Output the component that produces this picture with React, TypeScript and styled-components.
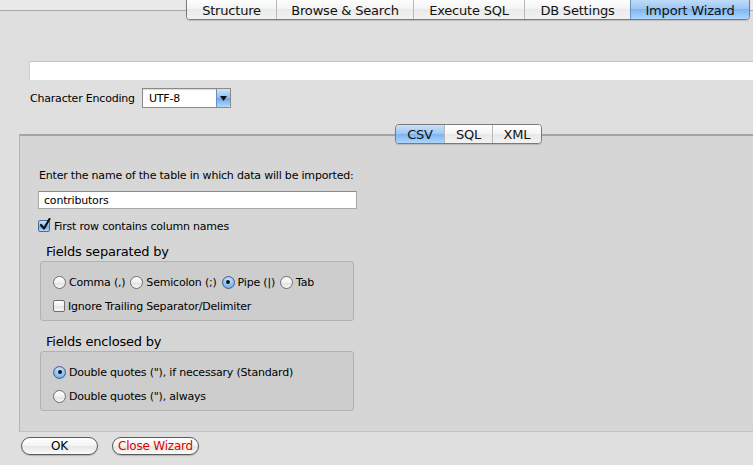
import React from "react";
import styled, { createGlobalStyle, css } from "styled-components";

const Global = createGlobalStyle`
  html, body { margin: 0; padding: 0; background: #dfdfdf; }
  body { font-family: "Lucida Grande", "DejaVu Sans", sans-serif; font-size: 11px; color: #000; letter-spacing: -0.2px; }
  * { box-sizing: border-box; }
`;

const Page = styled.div`
  width: 753px;
  height: 465px;
  overflow: hidden;
  background: #dfdfdf;
  display: flex;
  flex-direction: column;
`;

const Header = styled.div`
  height: 21px;
  background: linear-gradient(to bottom, #e9e9e9 0, #e9e9e9 10px, #a6a6a6 10px, #a6a6a6 11px, #dfdfdf 11px);
  display: flex;
  justify-content: flex-end;
  padding-right: 3px;
`;

const Segmented = styled.div<{ $h: number; $top?: number }>`
  display: flex;
  height: ${(p) => p.$h}px;
  margin-top: ${(p) => p.$top ?? 0}px;
  border: 1px solid #7a7a7a;
  border-radius: 4px;
  overflow: hidden;
  box-shadow: 0 1px 1px rgba(0,0,0,0.15);
`;

const Seg = styled.div<{ $w: number; $active?: boolean; $pt?: number }>`
  width: ${(p) => p.$w}px;
  display: flex;
  align-items: center;
  justify-content: center;
  padding-top: ${(p) => p.$pt ?? 0}px;
  font-size: 13px;
  color: #111;
  border-left: 1px solid #b8b8b8;
  &:first-child { border-left: none; }
  background: linear-gradient(to bottom, #ffffff 0%, #f4f4f4 50%, #e9e9e9 51%, #f2f2f2 100%);
  ${(p) =>
    p.$active &&
    css`
      background: linear-gradient(to bottom, #c9e0f9 0%, #9cc7f4 50%, #7bb4ef 51%, #acd5fb 100%);
      border-left-color: #6b8fbf;
    `}
`;

const Content = styled.div`
  display: flex;
  flex-direction: column;
  padding-left: 29px;
`;

const WideField = styled.div`
  margin-top: 40px;
  height: 19px;
  background: #fff;
  border-top: 1px solid #c4c4c4;
  border-left: 1px solid #d0d0d0;
`;

const EncRow = styled.div`
  margin-top: 8px;
  display: flex;
  align-items: center;
  gap: 7px;
  padding-left: 1px;
  height: 20px;
`;

const Label = styled.span`
  font-size: 11px;
  white-space: nowrap;
`;

const Select = styled.div`
  width: 89px;
  height: 20px;
  border: 1px solid #8a8a8a;
  background: #fff;
  display: flex;
  align-items: center;
  justify-content: space-between;
  padding-left: 6px;
  font-size: 11px;
  box-shadow: inset 0 1px 1px rgba(0,0,0,0.15);
`;

const SelectBtn = styled.div`
  width: 14px;
  height: 18px;
  border-left: 1px solid #6b8fbf;
  background: linear-gradient(to bottom, #d0e4fa 0%, #8fbff2 50%, #6aa6ea 51%, #b4d8fb 100%);
  display: flex;
  align-items: center;
  justify-content: center;
  border-radius: 0 2px 2px 0;
`;

const Panel = styled.div`
  margin-top: 26px;
  margin-left: 19px;
  height: 298px;
  background: #d6d6d6;
  border-top: 2px solid #a4a4a4;
  border-left: 1px solid #b4b4b4;
  border-bottom: 1px solid #c2c2c2;
  display: flex;
  flex-direction: column;
  padding-left: 18px;
`;

const PanelTabs = styled.div`
  margin-top: -12px;
  padding-left: 357px;
  display: flex;
`;

const Prompt = styled.div`
  margin-top: 25px;
  font-size: 11px;
  padding-left: 1px;
`;

const TextInput = styled.div`
  margin-top: 9px;
  width: 319px;
  height: 18px;
  background: #fff;
  border: 1px solid #a8a8a8;
  border-top-color: #8c8c8c;
  display: flex;
  align-items: center;
  padding-left: 5px;
  font-size: 11px;
`;

const CheckRow = styled.label<{ $mt: number }>`
  margin-top: ${(p) => p.$mt}px;
  display: flex;
  align-items: center;
  gap: 4px;
  font-size: 11px;
  height: 14px;
`;

const Box = styled.span<{ $checked?: boolean }>`
  width: 12px;
  height: 12px;
  border: 1px solid #6e6e6e;
  border-radius: 2px;
  background: linear-gradient(to bottom, #ffffff 0%, #f0f0f0 50%, #e2e2e2 51%, #f6f6f6 100%);
  display: inline-flex;
  align-items: center;
  justify-content: center;
  position: relative;
  ${(p) =>
    p.$checked &&
    css`
      background: linear-gradient(to bottom, #cfe3fa 0%, #90c0f2 50%, #6aa6ea 51%, #b4d8fb 100%);
      border-color: #4a6a9a;
    `}
`;

const GroupTitle = styled.div<{ $mt: number }>`
  margin-top: ${(p) => p.$mt}px;
  padding-left: 8px;
  font-size: 13px;
  height: 16px;
  line-height: 16px;
`;

const GroupBox = styled.div<{ $h: number }>`
  margin-top: 1px;
  margin-left: 2px;
  width: 314px;
  height: ${(p) => p.$h}px;
  background: #cdcdcd;
  border: 1px solid #b2b2b2;
  border-radius: 3px;
  display: flex;
  flex-direction: column;
  padding: 13px 0 0 12px;
  gap: 10px;
`;

const RadioRow = styled.div`
  display: flex;
  align-items: center;
  height: 14px;
  gap: 5px;
`;

const RadioItem = styled.label`
  display: flex;
  align-items: center;
  gap: 3px;
  font-size: 11px;
  white-space: nowrap;
`;

const Radio = styled.span<{ $on?: boolean }>`
  width: 13px;
  height: 13px;
  border-radius: 50%;
  border: 1px solid #6e6e6e;
  background: linear-gradient(to bottom, #ffffff 0%, #f0f0f0 50%, #e0e0e0 51%, #f8f8f8 100%);
  display: inline-flex;
  align-items: center;
  justify-content: center;
  ${(p) =>
    p.$on &&
    css`
      border-color: #3f5f8f;
      background: radial-gradient(circle at 50% 30%, #d6e8fb 0%, #8fbff2 55%, #5f9de6 100%);
      &::after {
        content: "";
        width: 4px;
        height: 4px;
        border-radius: 50%;
        background: #111;
      }
    `}
`;

const Footer = styled.div`
  display: flex;
  gap: 14px;
  padding: 5px 0 0 21px;
`;

const PillButton = styled.button<{ $w: number; $danger?: boolean }>`
  width: ${(p) => p.$w}px;
  height: 18px;
  border: 1px solid #5a5a5a;
  border-radius: 9px;
  background: linear-gradient(to bottom, #ffffff 0%, #f3f3f3 50%, #e6e6e6 51%, #fafafa 100%);
  font-family: inherit;
  letter-spacing: inherit;
  font-size: 12px;
  color: ${(p) => (p.$danger ? "#e00000" : "#000")};
  padding: 0;
  display: flex;
  align-items: center;
  justify-content: center;
  box-shadow: 0 1px 1px rgba(0,0,0,0.2);
`;

const Check = () => (
  <svg width="12" height="13" viewBox="0 0 12 13" style={{ position: "absolute", left: 0, top: -3 }}>
    <path d="M2 7 L5 10.5 L10.5 1" fill="none" stroke="#111" strokeWidth="2.2" strokeLinecap="round" strokeLinejoin="round" />
  </svg>
);

export default function App() {
  return (
    <Page>
      <Global />
      <Header>
        <Segmented $h={23} $top={-3}>
          <Seg $w={89} $pt={3}>Structure</Seg>
          <Seg $w={137} $pt={3}>Browse &amp; Search</Seg>
          <Seg $w={111} $pt={3}>Execute SQL</Seg>
          <Seg $w={106} $pt={3}>DB Settings</Seg>
          <Seg $w={119} $pt={3} $active>Import Wizard</Seg>
        </Segmented>
      </Header>
      <Content>
        <WideField />
        <EncRow>
          <Label>Character Encoding</Label>
          <Select>
            <span>UTF-8</span>
            <SelectBtn>
              <svg width="7" height="5" viewBox="0 0 7 5">
                <path d="M0 0 H7 L3.5 5 Z" fill="#111" />
              </svg>
            </SelectBtn>
          </Select>
        </EncRow>
      </Content>
      <Panel>
        <PanelTabs>
          <Segmented $h={20}>
            <Seg $w={48} $active>CSV</Seg>
            <Seg $w={48}>SQL</Seg>
            <Seg $w={49}>XML</Seg>
          </Segmented>
        </PanelTabs>
        <Prompt>Enter the name of the table in which data will be imported:</Prompt>
        <TextInput>contributors</TextInput>
        <CheckRow $mt={10}>
          <Box $checked>
            <Check />
          </Box>
          First row contains column names
        </CheckRow>
        <GroupTitle $mt={11}>Fields separated by</GroupTitle>
        <GroupBox $h={60}>
          <RadioRow>
            <RadioItem>
              <Radio />
              Comma (,)
            </RadioItem>
            <RadioItem>
              <Radio />
              Semicolon (;)
            </RadioItem>
            <RadioItem>
              <Radio $on />
              Pipe (|)
            </RadioItem>
            <RadioItem>
              <Radio />
              Tab
            </RadioItem>
          </RadioRow>
          <RadioRow>
            <RadioItem>
              <Box />
              Ignore Trailing Separator/Delimiter
            </RadioItem>
          </RadioRow>
        </GroupBox>
        <GroupTitle $mt={13}>Fields enclosed by</GroupTitle>
        <GroupBox $h={60}>
          <RadioRow>
            <RadioItem>
              <Radio $on />
              Double quotes ("), if necessary (Standard)
            </RadioItem>
          </RadioRow>
          <RadioRow>
            <RadioItem>
              <Radio />
              Double quotes ("), always
            </RadioItem>
          </RadioRow>
        </GroupBox>
      </Panel>
      <Footer>
        <PillButton $w={77}>OK</PillButton>
        <PillButton $w={87} $danger>Close Wizard</PillButton>
      </Footer>
    </Page>
  );
}
